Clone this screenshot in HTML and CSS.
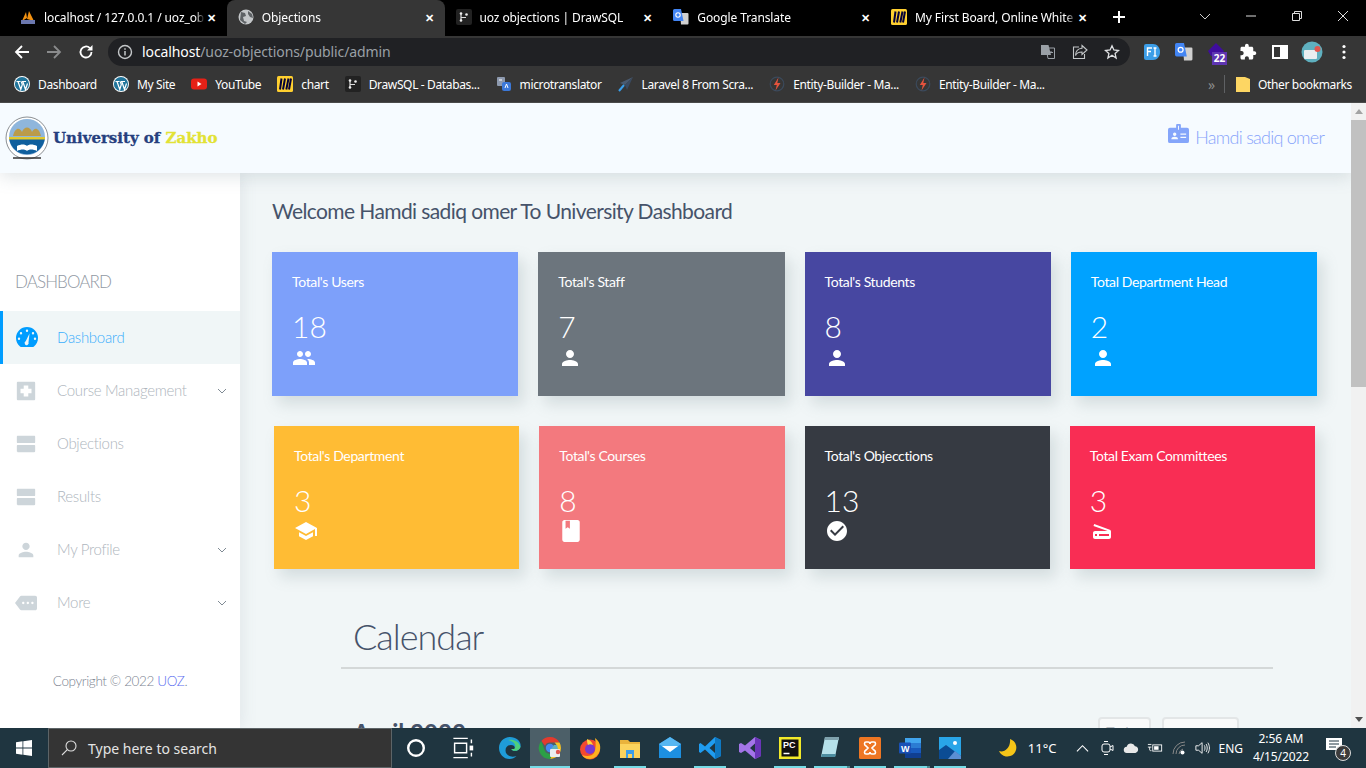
FILE: index.html
```html
<!DOCTYPE html>
<html lang="en">

<head>
    <meta charset="UTF-8">
    <meta name="viewport" content="width=device-width, initial-scale=1.0">
    <title>Objections</title>
    <link rel="stylesheet" href="styles.css">
</head>

<body>
    <svg class="sprites" xmlns="http://www.w3.org/2000/svg">
        <symbol id="i-person" viewBox="0 0 24 24"><path d="M12 12c2.21 0 4-1.79 4-4s-1.79-4-4-4-4 1.79-4 4 1.79 4 4 4zm0 2c-2.67 0-8 1.34-8 4v2h16v-2c0-2.66-5.33-4-8-4z"/></symbol>
        <symbol id="i-people" viewBox="0 0 24 24"><path d="M16 11c1.66 0 2.99-1.34 2.99-3S17.66 5 16 5c-1.66 0-3 1.34-3 3s1.34 3 3 3zm-8 0c1.66 0 2.99-1.34 2.99-3S9.66 5 8 5C6.34 5 5 6.34 5 8s1.34 3 3 3zm0 2c-2.33 0-7 1.17-7 3.5V19h14v-2.5c0-2.33-4.67-3.5-7-3.5zm8 0c-.29 0-.62.02-.97.05 1.16.84 1.97 1.97 1.97 3.45V19h6v-2.5c0-2.33-4.67-3.5-7-3.5z"/></symbol>
        <symbol id="i-school" viewBox="0 0 24 24"><path d="M5 13.18v4L12 21l7-3.82v-4L12 17l-7-3.82zM12 3L1 9l11 6 9-4.91V17h2V9L12 3z"/></symbol>
        <symbol id="i-book" viewBox="2 1 20 22"><path d="M18 2H6c-1.1 0-2 .9-2 2v16c0 1.1.9 2 2 2h12c1.1 0 2-.9 2-2V4c0-1.1-.9-2-2-2zM7 2.500h4v7.500l-2-1.500L7 10z" fill-rule="evenodd"/></symbol>
        <symbol id="i-check" viewBox="0 0 24 24"><path d="M12 2C6.48 2 2 6.48 2 12s4.48 10 10 10 10-4.48 10-10S17.52 2 12 2zm-2 15l-5-5 1.41-1.41L10 14.17l7.59-7.59L19 8l-9 9z"/></symbol>
        <symbol id="i-scanner" viewBox="0 0 24 24"><path d="M19.8 10.7L4.2 5l-.7 1.9L17.6 12H5c-1.1 0-2 .9-2 2v4c0 1.1.9 2 2 2h14c1.1 0 2-.9 2-2v-5.5c0-.8-.5-1.6-1.2-1.8zM7 17H5v-2h2v2zm12 0H9v-2h10v2z"/></symbol>
        <symbol id="i-agenda" viewBox="0 0 24 24"><path d="M21 13H3c-.55 0-1 .45-1 1v6c0 .55.45 1 1 1h18c.55 0 1-.45 1-1v-6c0-.55-.45-1-1-1zm0-10H3c-.55 0-1 .45-1 1v6c0 .55.45 1 1 1h18c.55 0 1-.45 1-1V4c0-.55-.45-1-1-1z"/></symbol>
        <symbol id="i-course" viewBox="0 0 24 24"><path fill-rule="evenodd" d="M3 2h18a1 1 0 0 1 1 1v18a1 1 0 0 1-1 1H3a1 1 0 0 1-1-1V3a1 1 0 0 1 1-1zm6.500 4v3.500H6v5h3.500V18h5v-3.500H18v-5h-3.500V6z"/></symbol>
        <symbol id="i-more" viewBox="0 0 24 24"><path d="M22 4H7c-.69 0-1.23.32-1.59.8L0 12l5.410 7.200c.36.480.9.800 1.590.800h15c1.100 0 2-.9 2-2V6c0-1.100-.9-2-2-2zM9 13.300c-.7 0-1.300-.6-1.300-1.300s.6-1.300 1.300-1.300 1.300.6 1.300 1.300-.6 1.300-1.300 1.300zm5 0c-.7 0-1.300-.6-1.300-1.300s.6-1.300 1.300-1.300 1.300.6 1.300 1.300-.6 1.300-1.300 1.300zm5 0c-.7 0-1.300-.6-1.300-1.300s.6-1.300 1.300-1.300 1.300.6 1.300 1.300-.6 1.300-1.300 1.300z"/></symbol>
        <symbol id="i-chev" viewBox="0 0 10 6"><path d="M1 1l4 4 4-4" fill="none" stroke="currentColor" stroke-width="1"/></symbol>
        <symbol id="i-wp" viewBox="0 0 16 16"><circle cx="8" cy="8" r="8" fill="#fff"/><circle cx="8" cy="8" r="7.100" fill="#21759b"/><path d="M2.500 5.500h4M8 5.500h4M4 5.500l2.800 8 1.500-5-1-3M8.800 5.500l2.700 8 2-6" fill="none" stroke="#fff" stroke-width="1.200"/></symbol>
        <symbol id="i-miro" viewBox="0 0 16 16"><rect width="16" height="16" rx="1.500" fill="#ffd02f"/><path d="M4.500 2.500L3 13.500M8 2.500L6 13.500M11.500 2.500L9.300 13.500M14 2.500l-2 11" stroke="#050038" stroke-width="2" fill="none"/></symbol>
        <symbol id="i-drawsql" viewBox="0 0 16 16"><rect width="16" height="16" rx="2" fill="#222"/><path d="M5 4v8M5 8.500h5" stroke="#ddd" stroke-width="1.200"/><circle cx="5" cy="4.500" r="1.300" fill="#eee"/><circle cx="5" cy="11.500" r="1.300" fill="#eee"/><circle cx="10.500" cy="5.500" r="1.300" fill="#eee"/></symbol>
        <symbol id="i-bolt" viewBox="0 0 16 16"><circle cx="8" cy="8" r="6.800" fill="none" stroke="#3b4a5c" stroke-width="1.200"/><path d="M9.500 1.500L4.800 9h3L6.500 14.500 11.500 7H8.300z" fill="#e5533d"/></symbol>
        <symbol id="i-gt" viewBox="0 0 16 16"><path d="M7 4h7.500a1 1 0 0 1 1 1v9.500a1 1 0 0 1-1 1H8z" fill="#d0d0d0"/><path d="M1.500 0H8l2.500 12H1.500a1.500 1.500 0 0 1-1.500-1.500v-9A1.500 1.500 0 0 1 1.500 0z" fill="#4285f4"/><circle cx="5" cy="6" r="2.200" fill="none" stroke="#fff" stroke-width="1.100"/></symbol>
    </svg>

    <div class="tabstrip">
        <div class="tab">
            <svg class="fav" viewBox="0 0 16 16"><path d="M2 12L6 3l1 6zM14 12L9 2l-2 8z" fill="#f29111"/><rect x="1" y="11" width="14" height="4" fill="#6c78af"/></svg>
            <span class="tab-title">localhost / 127.0.0.1 / uoz_ob</span><span class="tab-x">✕</span>
        </div>
        <div class="tab active">
            <svg class="fav" viewBox="0 0 16 16"><circle cx="8" cy="8" r="7.500" fill="#c4c7c9"/><path d="M3 3l4 1 1 3-3 1 1 4 3 1-2 2-5-4zM10 2l4 3 1 4-3-1-2-3z" fill="#5e6265"/></svg>
            <span class="tab-title">Objections</span><span class="tab-x">✕</span>
        </div>
        <div class="tab">
            <svg class="fav"><use href="#i-drawsql"/></svg>
            <span class="tab-title">uoz objections | DrawSQL</span><span class="tab-x">✕</span>
        </div>
        <div class="tab">
            <svg class="fav"><use href="#i-gt"/></svg>
            <span class="tab-title">Google Translate</span><span class="tab-x">✕</span>
        </div>
        <div class="tab">
            <svg class="fav"><use href="#i-miro"/></svg>
            <span class="tab-title">My First Board, Online White</span><span class="tab-x">✕</span>
        </div>
        <svg class="newtab" viewBox="0 0 14 14"><path d="M7 1v12M1 7h12" stroke="#fff" stroke-width="2"/></svg>
        <div class="winctl">
            <svg viewBox="0 0 12 12"><path d="M1 4l5 5 5-5" fill="none" stroke="#ccc"/></svg>
            <svg viewBox="0 0 12 12"><path d="M1 6h10" stroke="#ddd"/></svg>
            <svg viewBox="0 0 12 12"><path d="M1.500 3.500h7v7h-7zM3.500 3.500v-2h7v7h-2" fill="none" stroke="#ddd"/></svg>
            <svg viewBox="0 0 12 12"><path d="M1 1l10 10M11 1L1 11" stroke="#ddd"/></svg>
        </div>
    </div>

    <div class="toolbar">
        <svg class="nav-ic" viewBox="0 0 16 16"><path d="M15 8H2M8 2L2 8l6 6" fill="none" stroke="#fff" stroke-width="1.800"/></svg>
        <svg class="nav-ic" viewBox="0 0 16 16"><path d="M1 8h13M8 2l6 6-6 6" fill="none" stroke="#8a8b8c" stroke-width="1.800"/></svg>
        <svg class="nav-ic" viewBox="0 0 16 16"><path d="M13.500 8a5.500 5.500 0 1 1-1.600-3.900" fill="none" stroke="#fff" stroke-width="1.800"/><path d="M14.500 1v5.500H9z" fill="#fff"/></svg>
        <div class="omnibox">
            <svg class="info" viewBox="0 0 16 16"><circle cx="8" cy="8" r="6.500" fill="none" stroke="#c4c7c9" stroke-width="1.400"/><path d="M8 7v4.500M8 4.300v1.500" stroke="#c4c7c9" stroke-width="1.500"/></svg>
            <span class="url"><b>localhost</b>/uoz-objections/public/admin</span>
            <svg class="omni-ic" viewBox="0 0 16 16"><path d="M6 4h8.500v10.500H8z" fill="none" stroke="#9aa0a6"/><path d="M1 1h7.500l2.500 10H1z" fill="#9aa0a6"/><path d="M9 8.500h4M11 7v1.500" stroke="#9aa0a6"/></svg>
            <svg class="omni-ic" viewBox="0 0 16 16"><path d="M10 1.500l5 4.500-5 4.500V8C6.500 8 4.500 9 3.500 11.500 3.500 7.500 6 4.500 10 4.200z" fill="none" stroke="#c4c7c9" stroke-width="1.100"/><path d="M7 3H1.500v11.500h11V10" fill="none" stroke="#c4c7c9" stroke-width="1.100"/></svg>
            <svg class="omni-ic" viewBox="0 0 16 16"><path d="M8 1.800l1.900 4.200 4.600.5-3.400 3.100 1 4.500L8 11.300l-4.100 2.800 1-4.500-3.400-3.100 4.600-.5z" fill="none" stroke="#dfe1e3" stroke-width="1.300"/></svg>
        </div>
        <div class="ext-row">
            <svg class="ext" viewBox="0 0 18 18"><path d="M3 1h7c4 0 7 3.500 7 8s-3 8-7 8H3a2 2 0 0 1-2-2V3a2 2 0 0 1 2-2z" fill="#3c9ee8"/><path d="M4.500 13V5H9M4.500 8.500h3.500M12 5v8M10.500 5h3M10.500 13h3" fill="none" stroke="#fff" stroke-width="1.400"/></svg>
            <svg class="ext" viewBox="0 0 16 16"><use href="#i-gt"/></svg>
            <div class="ext-badge-wrap">
                <svg class="ext" viewBox="0 0 18 18"><path d="M9 0l8 8-3 5H4L1 8z" fill="#3f0d9e"/></svg>
                <span class="ext-badge">22</span>
            </div>
            <svg class="ext" viewBox="0 0 24 24"><path fill="#fff" d="M20.500 11H19V7c0-1.100-.9-2-2-2h-4V3.500C13 2.120 11.880 1 10.500 1S8 2.120 8 3.500V5H4c-1.100 0-1.990.9-1.990 2v3.800H3.500c1.490 0 2.700 1.210 2.700 2.700s-1.210 2.700-2.700 2.700H2V20c0 1.100.9 2 2 2h3.800v-1.500c0-1.490 1.210-2.700 2.700-2.700s2.700 1.210 2.700 2.700V22H17c1.100 0 2-.9 2-2v-4h1.500c1.380 0 2.500-1.120 2.500-2.500S21.880 11 20.500 11z"/></svg>
            <svg class="ext" viewBox="0 0 18 18"><path fill-rule="evenodd" d="M1 2h16v14H1zm2 2v10h6V4z" fill="#fff"/></svg>
            <svg class="ext ext-avatar" viewBox="0 0 22 22"><circle cx="11" cy="11" r="10.500" fill="#5fb0bf"/><rect x="3" y="9" width="13" height="9" rx="1" fill="#e9eef0"/><circle cx="16.500" cy="8" r="3" fill="#e0574f"/></svg>
            <svg class="ext" viewBox="0 0 18 18"><circle cx="9" cy="3.500" r="1.600" fill="#fff"/><circle cx="9" cy="9" r="1.600" fill="#fff"/><circle cx="9" cy="14.500" r="1.600" fill="#fff"/></svg>
        </div>
    </div>

    <div class="bookmarks">
        <a class="bm"><svg class="fav"><use href="#i-wp"/></svg>Dashboard</a>
        <a class="bm"><svg class="fav"><use href="#i-wp"/></svg>My Site</a>
        <a class="bm"><svg class="fav" viewBox="0 0 16 16"><rect y="2.500" width="16" height="11" rx="3" fill="#e62117"/><path d="M6.500 5.500v5l4-2.500z" fill="#fff"/></svg>YouTube</a>
        <a class="bm"><svg class="fav"><use href="#i-miro"/></svg>chart</a>
        <a class="bm"><svg class="fav"><use href="#i-drawsql"/></svg>DrawSQL - Databas...</a>
        <a class="bm"><svg class="fav" viewBox="0 0 16 16"><rect x="1" y="1" width="8" height="9" rx="1" fill="#8d99ae"/><rect x="6" y="6" width="9" height="9" rx="2" fill="#3b78d8"/><path d="M3 4h3M9 12l1.500-4 1.500 4" stroke="#fff" fill="none"/></svg>microtranslator</a>
        <a class="bm"><svg class="fav" viewBox="0 0 16 16"><path d="M15 1L2 7l5 2z" fill="#495a70"/><path d="M15 1L7 9l2 5z" fill="#3a4a60"/><path d="M6 9l-5 6" stroke="#39a0ed" stroke-width="2"/></svg>Laravel 8 From Scra...</a>
        <a class="bm"><svg class="fav"><use href="#i-bolt"/></svg>Entity-Builder - Ma...</a>
        <a class="bm"><svg class="fav"><use href="#i-bolt"/></svg>Entity-Builder - Ma...</a>
        <div class="bm-end">
            <span class="bm-more">»</span>
            <span class="bm-sep"></span>
            <a class="bm"><svg class="folder" viewBox="0 0 14 16"><path d="M0 1h9l5 2v13H0z" fill="#fdd663"/></svg>Other bookmarks</a>
        </div>
    </div>

    <div class="viewport">
        <div class="page">
            <header class="topbar">
                <div class="brand">
                    <svg class="seal" viewBox="0 0 44 44">
                        <circle cx="22" cy="22" r="21" fill="#fff" stroke="#8b8f93"/>
                        <circle cx="22" cy="21" r="18" fill="#8fb6dc"/>
                        <path d="M4.200 23a18 18 0 0 0 35.600 0z" fill="#0f5f9e"/>
                        <path d="M4 21h36v2.500H4z" fill="#e2c92e"/>
                        <path d="M8 20c2-9 7-9 9-4 2-6 8-6 10 0 2-5 7-5 9 4z" fill="#bb9b4a"/>
                        <path d="M12 35c4-2 8-2 10 0 2-2 6-2 10 0v-5c-4-2-8-2-10 0-2-2-6-2-10 0z" fill="#fff"/>
                        <path d="M8 42h28" stroke="#333" stroke-width="1.500"/>
                    </svg>
                    <span class="brand-name">University of <em>Zakho</em></span>
                </div>
                <div class="user">
                    <svg class="user-ic" viewBox="0 0 22 22"><path fill-rule="evenodd" d="M9.500 1h3a1 1 0 0 1 1 1v3H20a2 2 0 0 1 2 2v12a2 2 0 0 1-2 2H2a2 2 0 0 1-2-2V7a2 2 0 0 1 2-2h6.500V2a1 1 0 0 1 1-1zM10.500 3v4h1V3zM7 10a1.800 1.800 0 1 0 0 3.600A1.800 1.800 0 0 0 7 10zm-3.500 7h7c0-2-1.500-2.700-3.500-2.700S3.500 15 3.500 17zM13 11v1.300h6V11zm0 3.500v1.300h6v-1.300z"/></svg>
                    <span>Hamdi sadiq omer</span>
                </div>
            </header>

            <div class="layout">
                <aside class="sidebar">
                    <h2 class="side-title">DASHBOARD</h2>
                    <ul class="side-nav">
                        <li class="side-item active">
                            <svg class="side-ic" viewBox="0 0 24 24"><path fill-rule="evenodd" d="M12 1a11 11 0 0 1 11 11c0 3.500-1.500 6.500-4 8.500-.6.400-1.100.500-1.600.500H6.600c-.5 0-1-.1-1.600-.5C2.500 18.500 1 15.500 1 12A11 11 0 0 1 12 1zm0 2.500a1.200 1.200 0 1 0 0 2.400 1.200 1.200 0 0 0 0-2.400zM6 6a1.200 1.200 0 1 0 0 2.400A1.200 1.200 0 0 0 6 6zm12 0a1.200 1.200 0 1 0 0 2.400A1.200 1.200 0 0 0 18 6zM4 11.500a1.200 1.200 0 1 0 0 2.400 1.200 1.200 0 0 0 0-2.400zm16 0a1.200 1.200 0 1 0 0 2.400 1.200 1.200 0 0 0 0-2.400zM14.500 7.500l-3.800 7.800a2 2 0 1 0 2.800 1z"/></svg>
                            <span>Dashboard</span>
                        </li>
                        <li class="side-item">
                            <svg class="side-ic"><use href="#i-course"/></svg>
                            <span>Course Management</span>
                            <svg class="side-chev"><use href="#i-chev"/></svg>
                        </li>
                        <li class="side-item">
                            <svg class="side-ic"><use href="#i-agenda"/></svg>
                            <span>Objections</span>
                        </li>
                        <li class="side-item">
                            <svg class="side-ic"><use href="#i-agenda"/></svg>
                            <span>Results</span>
                        </li>
                        <li class="side-item">
                            <svg class="side-ic"><use href="#i-person"/></svg>
                            <span>My Profile</span>
                            <svg class="side-chev"><use href="#i-chev"/></svg>
                        </li>
                        <li class="side-item">
                            <svg class="side-ic"><use href="#i-more"/></svg>
                            <span>More</span>
                            <svg class="side-chev"><use href="#i-chev"/></svg>
                        </li>
                    </ul>
                    <p class="copyright">Copyright © 2022 <a>UOZ</a>.</p>
                </aside>

                <main class="content">
                    <h1 class="welcome">Welcome Hamdi sadiq omer To University Dashboard</h1>

                    <div class="cards">
                        <div class="card c-blue">
                            <p class="card-label">Total's Users</p>
                            <p class="card-num">18</p>
                            <svg class="card-ic"><use href="#i-people"/></svg>
                        </div>
                        <div class="card c-grey">
                            <p class="card-label">Total's Staff</p>
                            <p class="card-num">7</p>
                            <svg class="card-ic"><use href="#i-person"/></svg>
                        </div>
                        <div class="card c-indigo">
                            <p class="card-label">Total's Students</p>
                            <p class="card-num">8</p>
                            <svg class="card-ic"><use href="#i-person"/></svg>
                        </div>
                        <div class="card c-sky">
                            <p class="card-label">Total Department Head</p>
                            <p class="card-num">2</p>
                            <svg class="card-ic"><use href="#i-person"/></svg>
                        </div>
                    </div>

                    <div class="cards cards-2">
                        <div class="card c-yellow">
                            <p class="card-label">Total's Department</p>
                            <p class="card-num">3</p>
                            <svg class="card-ic"><use href="#i-school"/></svg>
                        </div>
                        <div class="card c-rose">
                            <p class="card-label">Total's Courses</p>
                            <p class="card-num">8</p>
                            <svg class="card-ic"><use href="#i-book"/></svg>
                        </div>
                        <div class="card c-dark">
                            <p class="card-label">Total's Objecctions</p>
                            <p class="card-num">13</p>
                            <svg class="card-ic"><use href="#i-check"/></svg>
                        </div>
                        <div class="card c-red">
                            <p class="card-label">Total Exam Committees</p>
                            <p class="card-num">3</p>
                            <svg class="card-ic"><use href="#i-scanner"/></svg>
                        </div>
                    </div>

                    <section class="calendar">
                        <h2 class="cal-title">Calendar</h2>
                        <div class="cal-bar">
                            <h3 class="cal-month">April 2022</h3>
                            <div class="cal-btns">
                                <button class="cal-btn">Today</button>
                                <button class="cal-btn cal-arrows"><span>‹</span><span>›</span></button>
                            </div>
                        </div>
                    </section>
                </main>
            </div>
        </div>

        <div class="scrollbar">
            <span class="sb-up"></span>
            <div class="sb-track"><span class="sb-thumb"></span></div>
            <span class="sb-down"></span>
        </div>
    </div>

    <footer class="taskbar">
        <div class="start">
            <svg viewBox="0 0 16 16"><path d="M0 2.200l6.500-.9v6.300H0zM7.300 1.200L16 0v7.600H7.300zM0 8.400h6.500v6.300L0 13.800zM7.300 8.400H16V16l-8.700-1.200z" fill="#fff"/></svg>
        </div>
        <div class="search">
            <svg viewBox="0 0 16 16"><circle cx="10" cy="6" r="5" fill="none" stroke="#ddd" stroke-width="1.100"/><path d="M6.300 9.700L1 15" stroke="#ddd" stroke-width="1.100"/></svg>
            <span>Type here to search</span>
        </div>
        <div class="tb-app">
            <svg class="tb-ic" viewBox="0 0 20 20"><circle cx="10" cy="10" r="6.500" fill="none" stroke="#fff" stroke-width="2"/></svg>
        </div>
        <div class="tb-app">
            <svg class="tb-ic" viewBox="0 0 20 20"><path d="M2 2h12M2 18h12M3 6h10v8H3zM17 3v3M17 14v3" fill="none" stroke="#fff" stroke-width="1.200"/><rect x="15.500" y="8" width="3" height="4" fill="#fff"/></svg>
        </div>
        <div class="tb-app">
            <svg class="tb-ic" viewBox="0 0 24 24"><path d="M12 1C5.500 1 1 6 1 12c0 6 4.500 11 10.500 11 3 0 5-1 7-3-6 2-11-1-11-5.500C7.500 11 10 9 13 9c3 0 4.500 2 3.500 4h-3c0 2.500 7.500 3 9-2C23.500 5.500 18.500 1 12 1z" fill="#1f9cd8"/><path d="M22.500 11C21 5 15 3 10 4 15 5 19 8 16.500 13h-3c0 2.500 7.500 3 9-2z" fill="#4ed07a"/></svg>
        </div>
        <div class="tb-app open current">
            <svg class="tb-ic" viewBox="0 0 24 24"><path d="M12 1a11 11 0 0 1 9.500 5.500H12a5.500 5.500 0 0 0-5 3.200L3.300 5A11 11 0 0 1 12 1z" fill="#e33b2e"/><path d="M21.500 6.500A11 11 0 0 1 12 23l5-8a5.500 5.500 0 0 0-.5-8.500z" fill="#f7c325"/><path d="M3.300 5A11 11 0 0 0 12 23l4.500-7.500a5.500 5.500 0 0 1-9.500-.5z" fill="#2c9f46"/><circle cx="12" cy="12" r="4.200" fill="#4688f1"/><rect x="12" y="13" width="10" height="8" rx="1" fill="#e9eef0"/><circle cx="20" cy="16" r="2.200" fill="#e0574f"/><path d="M13 13l3-4h3l1 4z" fill="#5fb0bf"/></svg>
        </div>
        <div class="tb-app">
            <svg class="tb-ic" viewBox="0 0 24 24"><circle cx="12" cy="13.500" r="10" fill="#f2492f"/><path d="M17 2c4 3 6 7 5 12-1 5-6 9-10 9-3 0-6-1-8-4 5 2 10 1 12-2 2-4 2-10 1-15z" fill="#ffb11f"/><circle cx="12" cy="13" r="5" fill="#7739d1"/><path d="M9 3c3 1 5 3 6 6-2-1-4-1-5 0-1-2-1-4-1-6z" fill="#ffd53c"/></svg>
        </div>
        <div class="tb-app open">
            <svg class="tb-ic" viewBox="0 0 24 24"><path d="M2 4h8l2 2h10v4H2z" fill="#e9b33c"/><rect x="2" y="8" width="20" height="14" fill="#fbd35d"/><path d="M8 14h8v8h-2v-4h-4v4H8z" fill="#3c9ee8"/></svg>
        </div>
        <div class="tb-app">
            <svg class="tb-ic" viewBox="0 0 24 24"><path d="M12 1L1 8v14h22V8z" fill="#1d8fe0"/><path d="M1 8l11 8 11-8-11-7z" fill="#57b7f2"/><path d="M4 10h16l-8 6z" fill="#fff"/></svg>
        </div>
        <div class="tb-app open">
            <svg class="tb-ic" viewBox="0 0 24 24"><path d="M17 1l6 3v16l-6 3-10-9.500L2.500 17 1 16V8l1.500-1L7 10.500zM17 7l-5.500 5 5.500 5z" fill="#1f9cf0"/><path d="M17 1l6 3v16l-6 3z" fill="#0e78c2"/></svg>
        </div>
        <div class="tb-app">
            <svg class="tb-ic" viewBox="0 0 24 24"><path d="M17 1l6 3v16l-6 3-10-8.500L3 17l-2-1V8l2-1 4 2.500zM17 7.500L12 12l5 4.500z" fill="#a375e8"/><path d="M17 1l6 3v16l-6 3z" fill="#6a35b8"/></svg>
        </div>
        <div class="tb-app open">
            <svg class="tb-ic" viewBox="0 0 24 24"><rect x="1" y="1" width="22" height="22" fill="#f2e92a"/><rect x="3.500" y="3.500" width="17" height="17" fill="#111"/><text class="pc-text" x="5" y="12">PC</text><path d="M5.500 17.500h6" stroke="#fff" stroke-width="1.500"/></svg>
        </div>
        <div class="tb-app open split">
            <svg class="tb-ic" viewBox="0 0 24 24"><path d="M7 1h14l-4 20H3z" fill="#b6e1ea"/><path d="M7 1h14v3H6.500z" fill="#7fa2ad"/><path d="M3 21h14l1-3H4z" fill="#4d8da0"/></svg>
        </div>
        <div class="tb-app open">
            <svg class="tb-ic" viewBox="0 0 24 24"><rect x="1" y="1" width="22" height="22" rx="1.500" fill="#ee7623"/><path d="M8 6h2c1 0 2 1 2 2 0-1 1-2 2-2h2c2 0 2 3 0 4l-2 2 2 2c2 1 2 4 0 4h-2c-1 0-2-1-2-2 0 1-1 2-2 2H8c-2 0-2-3 0-4l2-2-2-2C6 9 6 6 8 6z" fill="none" stroke="#fff" stroke-width="1.600"/></svg>
        </div>
        <div class="tb-app open split">
            <svg class="tb-ic" viewBox="0 0 24 24"><rect x="7" y="2" width="16" height="20" rx="1" fill="#2b7cd3"/><rect x="7" y="2" width="16" height="5" fill="#41a5ee"/><rect x="7" y="12" width="16" height="5" fill="#185abd"/><rect x="7" y="17" width="16" height="5" fill="#103f91"/><rect x="1" y="6.500" width="12" height="11" rx="1" fill="#1951b6"/><text class="w-text" x="3" y="15.500">W</text></svg>
        </div>
        <div class="tb-app open">
            <svg class="tb-ic" viewBox="0 0 24 24"><rect x="1" y="1" width="22" height="22" fill="#29a5e8"/><path d="M1 23V14l7-5 15 11v3z" fill="#0b4c94"/><path d="M10 23l7-8 6 5v3z" fill="#5b8fd3"/><circle cx="17" cy="7" r="2" fill="#fff"/></svg>
        </div>

        <div class="tray">
            <svg class="moon" viewBox="0 0 20 20"><path d="M12 1a9 9 0 1 1-11 12c5 2 12-3 11-12z" fill="#f5c518"/></svg>
            <span class="temp">11°C</span>
            <svg class="tray-ic up" viewBox="0 0 14 14"><path d="M1 10l6-6 6 6" fill="none" stroke="#fff" stroke-width="1.200"/></svg>
            <svg class="tray-ic" viewBox="0 0 16 16"><rect x="3" y="4" width="8" height="8" rx="2" fill="none" stroke="#fff"/><path d="M11 7l3-1.500v5L11 9M5 1.500h4M5 14.500h4" fill="none" stroke="#fff"/></svg>
            <svg class="tray-ic" viewBox="0 0 18 14"><path d="M4.500 12.500a3.500 3.500 0 0 1-.3-7A5 5 0 0 1 13.500 5a3.800 3.800 0 0 1 .5 7.500z" fill="#e8e8e8"/></svg>
            <svg class="tray-ic" viewBox="0 0 18 14"><path d="M1 3h4M1 6h4M3 6v3c0 1 1 1 2 1" fill="none" stroke="#fff"/><rect x="6.500" y="3.500" width="10" height="7" fill="none" stroke="#fff"/><rect x="8" y="5" width="5" height="4" fill="#fff"/></svg>
            <svg class="tray-ic" viewBox="0 0 16 16"><path d="M2 14a12 12 0 0 1 12-12M5 14a9 9 0 0 1 9-9M8 14a6 6 0 0 1 4-5" fill="none" stroke="#888"/><circle cx="11.500" cy="12.500" r="2" fill="#fff"/></svg>
            <svg class="tray-ic" viewBox="0 0 18 16"><path d="M1 5.500h3L8 2v12L4 10.500H1z" fill="none" stroke="#fff"/><path d="M10.500 5c1 1.800 1 4.200 0 6M12.500 3.500c1.700 2.800 1.700 6.200 0 9M14.500 2c2.300 3.800 2.300 8.200 0 12" fill="none" stroke="#fff"/></svg>
            <span class="lang">ENG</span>
            <div class="clock"><span>2:56 AM</span><span>4/15/2022</span></div>
            <div class="notif">
                <svg viewBox="0 0 18 16"><path d="M0 0h16v12H0z" fill="#fff"/><path d="M3 3h10M3 6h10M3 9h7" stroke="#1f3540"/></svg>
                <span class="notif-count">4</span>
            </div>
        </div>
    </footer>
</body>

</html>
```

FILE: styles.css
```css
* {
    margin: 0;
    padding: 0;
    box-sizing: border-box;
}

html, body {
    height: 100%;
    overflow: hidden;
}

body {
    width: 1366px;
    height: 768px;
    display: flex;
    flex-direction: column;
    font-family: "Noto Sans", sans-serif;
    background: #000;
}

.sprites {
    display: none;
}

.fav {
    width: 16px;
    height: 16px;
    flex: none;
}

/* browser chrome */
.tabstrip {
    height: 36px;
    flex: none;
    display: flex;
    align-items: center;
    background: #000;
    padding-left: 9px;
    color: #fff;
    font-size: 12px;
}

.tab {
    width: 217.75px;
    height: 36px;
    flex: none;
    display: flex;
    align-items: center;
    padding: 0 9px 2px 11px;
    gap: 8px;
}

.tab.active {
    background: #363636;
    border-radius: 8px 8px 0 0;
}

.tab-title {
    flex: 1;
    white-space: nowrap;
    overflow: hidden;
    letter-spacing: -0.1px;
    mask-image: linear-gradient(to left, transparent 0, #000 10px);
}

.tab-x {
    font-size: 11px;
    font-weight: 700;
    width: 12px;
    margin-left: -7px;
    text-align: center;
}

.newtab {
    width: 14px;
    height: 14px;
    margin-left: 14px;
    margin-top: -2px;
}

.winctl {
    margin-left: auto;
    display: flex;
    align-items: center;
    gap: 34px;
    padding: 0 17px 4px 0;
}

.winctl svg {
    width: 12px;
    height: 12px;
}

.toolbar {
    height: 32px;
    flex: none;
    display: flex;
    align-items: center;
    background: #363636;
    padding-left: 14px;
}

.nav-ic {
    width: 16px;
    height: 16px;
    margin-right: 16px;
}

.omnibox {
    width: 1022px;
    height: 28px;
    margin-left: -2px;
    border-radius: 14px;
    background: #202124;
    display: flex;
    align-items: center;
    padding: 0 10px 0 9px;
    gap: 16px;
    font-size: 14px;
    color: #9aa0a6;
}

.info {
    width: 16px;
    height: 16px;
    margin-right: -7px;
}

.url {
    flex: 1;
    letter-spacing: -0.1px;
    margin-top: -2px;
}

.url b {
    font-weight: 400;
    color: #fff;
}

.omni-ic {
    width: 16px;
    height: 16px;
}

.ext-row {
    display: flex;
    align-items: center;
    gap: 14px;
    padding-left: 13px;
}

.ext {
    width: 18px;
    height: 18px;
    display: block;
}

.ext-avatar {
    width: 22px;
    height: 22px;
    margin: 0 -2px;
}

.ext-badge-wrap {
    position: relative;
}

.ext-badge {
    position: absolute;
    left: 5px;
    top: 9px;
    width: 15px;
    height: 13px;
    background: #5e35b1;
    color: #fff;
    font-size: 10px;
    font-weight: 700;
    line-height: 13px;
    text-align: center;
}

.bookmarks {
    height: 35px;
    flex: none;
    display: flex;
    align-items: center;
    background: #363636;
    border-bottom: 1px solid #4a4a4a;
    padding: 0 0 2px 14px;
    gap: 16px;
    font-size: 12px;
    color: #fff;
}

.bm {
    display: flex;
    align-items: center;
    gap: 8px;
    white-space: nowrap;
    letter-spacing: -0.36px;
}

.bm-end {
    margin-left: auto;
    display: flex;
    align-items: center;
    padding-right: 14px;
}

.bm-more {
    color: #8a8b8c;
    font-size: 14px;
}

.bm-sep {
    width: 1px;
    height: 18px;
    background: #5f6164;
    margin: 0 11px 0 9px;
}

.folder {
    width: 14px;
    height: 16px;
}

/* the page */
.viewport {
    flex: 1;
    min-height: 0;
    display: flex;
    background: #f1f6f7;
}

.page {
    flex: 1;
    min-width: 0;
    display: flex;
    flex-direction: column;
    font-family: "Lato", sans-serif;
    font-weight: 300;
    overflow: hidden;
}

.topbar {
    height: 70px;
    flex: none;
    display: flex;
    align-items: center;
    justify-content: space-between;
    background: #f6fbff;
    box-shadow: 0 4px 16px rgba(120, 135, 145, 0.22);
    padding: 0 27px 0 5px;
    position: relative;
    z-index: 2;
}

.brand {
    display: flex;
    align-items: center;
    gap: 4px;
}

.seal {
    width: 44px;
    height: 44px;
}

.brand-name {
    font-family: "DejaVu Serif", serif;
    font-weight: 700;
    font-size: 15px;
    -webkit-text-stroke: 0.3px currentColor;
    color: #263f7e;
}

.brand-name em {
    font-style: normal;
    color: #e2e235;
}

.user {
    display: flex;
    align-items: center;
    gap: 6px;
    font-size: 18px;
    letter-spacing: -0.75px;
    color: #86a3fb;
    padding-bottom: 2px;
}

.user-ic {
    width: 21px;
    height: 21px;
    fill: #84a5fa;
    margin-top: -8px;
}

.layout {
    flex: 1;
    min-height: 0;
    display: flex;
}

.sidebar {
    width: 240px;
    flex: none;
    background: #fff;
    box-shadow: 3px 0 14px rgba(120, 135, 145, 0.12);
    padding-top: 98px;
    position: relative;
    z-index: 1;
}

.side-title {
    font-size: 17px;
    font-weight: 300;
    letter-spacing: -0.9px;
    color: #9098a3;
    padding-left: 15px;
    line-height: 22px;
    margin-bottom: 18px;
}

.side-nav {
    list-style: none;
}

.side-item {
    height: 53px;
    display: flex;
    align-items: center;
    padding: 0 13px 0 15px;
    font-size: 15px;
    letter-spacing: -0.3px;
    color: #aeb5bd;
}

.side-item span {
    margin-top: -2px;
}

.side-item.active {
    background: #f0f6f7;
    border-left: 3px solid #009dff;
    padding-left: 12px;
    color: #3caefc;
}

.side-ic {
    width: 22px;
    height: 22px;
    flex: none;
    fill: #cdd5da;
    margin-right: 20px;
}

.side-item.active .side-ic {
    width: 24px;
    height: 24px;
    fill: #009dff;
    margin-right: 18px;
}

.side-chev {
    width: 10px;
    height: 6px;
    margin-left: auto;
    color: #7f8a94;
}

.copyright {
    text-align: center;
    font-size: 13.500px;
    letter-spacing: -0.38px;
    color: #7b8390;
    margin-top: 44px;
}

.copyright a {
    color: #5a6cf0;
}

.content {
    flex: 1;
    min-width: 0;
    padding: 24px 34px 0 32px;
    overflow: hidden;
}

.welcome {
    font-size: 21px;
    font-weight: 400;
    letter-spacing: -0.6px;
    line-height: 28px;
    color: #46536a;
    margin-bottom: 27px;
}

.cards {
    display: grid;
    grid-template-columns: repeat(4, 1fr);
    column-gap: 20px;
}

.cards-2 {
    margin-top: 30px;
    padding: 0 2px;
}

.card {
    height: 144px;
    padding: 20px 20px 0;
    color: #fff;
    box-shadow: 6px 8px 14px rgba(110, 130, 135, 0.22);
}

.cards-2 .card {
    height: 143px;
}

.card-label {
    font-size: 14px;
    font-weight: 400;
    letter-spacing: -0.36px;
    line-height: 20px;
}

.card-num {
    font-size: 30px;
    font-weight: 300;
    line-height: 36px;
    margin-top: 16px;
}

.card-ic {
    display: block;
    width: 24px;
    height: 24px;
    fill: #fff;
    margin-top: 2px;
}

.cards-2 .card-ic {
    margin-top: 1px;
}

.c-blue { background: #7da0fa; }
.c-grey { background: #6c757d; }
.c-indigo { background: #4747a1; }
.c-sky { background: #00a2ff; }
.c-yellow { background: #ffbc34; }
.c-rose { background: #f3797e; }
.c-dark { background: #363a42; }
.c-red { background: #f92d54; }

.calendar {
    margin: 43px 44px 0 69px;
}

.cal-title {
    font-size: 36px;
    font-weight: 300;
    letter-spacing: -1px;
    line-height: 48px;
    color: #46536a;
    padding: 0 12px 7px;
    border-bottom: 2px solid #d4d8d8;
}

.cal-bar {
    display: flex;
    align-items: flex-start;
    justify-content: space-between;
    padding: 48px 34px 0 12px;
}

.cal-month {
    font-size: 24px;
    font-weight: 700;
    color: #46536a;
    margin-top: 1px;
}

.cal-btns {
    display: flex;
    gap: 11px;
}

.cal-btn {
    width: 53px;
    height: 28px;
    background: #f9fafa;
    border: 2px solid #e3e6e7;
    border-radius: 4px;
    font-family: inherit;
    font-size: 14px;
    color: #b9bec3;
}

.cal-arrows {
    width: 77px;
    display: flex;
    justify-content: space-around;
    align-items: center;
    font-size: 20px;
}

/* browser scrollbar */
.scrollbar {
    width: 15px;
    flex: none;
    display: flex;
    flex-direction: column;
    background: #f1f1f1;
    position: relative;
    z-index: 3;
}

.sb-up, .sb-down {
    height: 17px;
    flex: none;
    display: flex;
    align-items: center;
    justify-content: center;
}

.sb-up::before, .sb-down::before {
    content: "";
    border-left: 4px solid transparent;
    border-right: 4px solid transparent;
}

.sb-up::before {
    border-bottom: 5px solid #a3a3a3;
}

.sb-down::before {
    border-top: 5px solid #505050;
}

.sb-track {
    flex: 1;
}

.sb-thumb {
    display: block;
    height: 267px;
    background: #c1c1c1;
}

/* windows taskbar */
.taskbar {
    height: 40px;
    flex: none;
    display: flex;
    align-items: stretch;
    background: #1f3540;
    color: #fff;
}

.start {
    width: 48px;
    flex: none;
    display: flex;
    align-items: center;
    justify-content: center;
}

.start svg {
    width: 16px;
    height: 16px;
}

.search {
    width: 344px;
    flex: none;
    display: flex;
    align-items: center;
    gap: 11px;
    padding-left: 12px;
    background: #343434;
    border: 1px solid #5d6467;
    font-size: 14px;
    color: #e4e4e4;
}

.search svg {
    width: 16px;
    height: 16px;
}

.tb-app {
    width: 40px;
    flex: none;
    display: flex;
    align-items: center;
    justify-content: center;
    position: relative;
}

.tb-app:nth-child(3), .tb-app:nth-child(4) {
    width: 47px;
}

.tb-app:nth-child(4) {
    margin-right: 4px;
}

.tb-ic {
    width: 24px;
    height: 24px;
}

.tb-app.current {
    background: #4c5f68;
}

.tb-app.open::after {
    content: "";
    position: absolute;
    left: 4px;
    right: 4px;
    bottom: 0;
    height: 2px;
    background: #76dbe6;
}

.tb-app.current::after {
    left: 0;
    right: 0;
}

.tb-app.split::after {
    right: 0;
    border-right: 3px solid #4c8a92;
}

.pc-text {
    font-family: "Liberation Sans", sans-serif;
    font-weight: 700;
    font-size: 9px;
    fill: #fff;
}

.w-text {
    font-family: "Liberation Sans", sans-serif;
    font-weight: 700;
    font-size: 9px;
    fill: #fff;
}

.tray {
    margin-left: auto;
    display: flex;
    align-items: center;
    padding-right: 16px;
    font-size: 13px;
}

.moon {
    width: 20px;
    height: 20px;
    margin-right: 10px;
}

.temp {
    margin-right: 20px;
}

.tray-ic {
    width: 16px;
    height: 16px;
    margin-right: 8px;
}

.tray-ic.up {
    width: 13px;
    height: 13px;
    margin-right: 10px;
}

.lang {
    font-size: 12px;
    margin: 0 7px 0 -1px;
}

.clock {
    width: 62px;
    display: flex;
    flex-direction: column;
    align-items: center;
    font-size: 12px;
    line-height: 18px;
    letter-spacing: -0.1px;
    margin-right: 14px;
}

.notif {
    position: relative;
    width: 24px;
    height: 24px;
    margin-top: 4px;
}

.notif svg {
    width: 18px;
    height: 16px;
}

.notif-count {
    position: absolute;
    left: 9px;
    top: 7px;
    width: 16px;
    height: 16px;
    border-radius: 50%;
    background: #3b3b3b;
    border: 1px solid #ddd;
    font-size: 10px;
    line-height: 14px;
    text-align: center;
}
```
